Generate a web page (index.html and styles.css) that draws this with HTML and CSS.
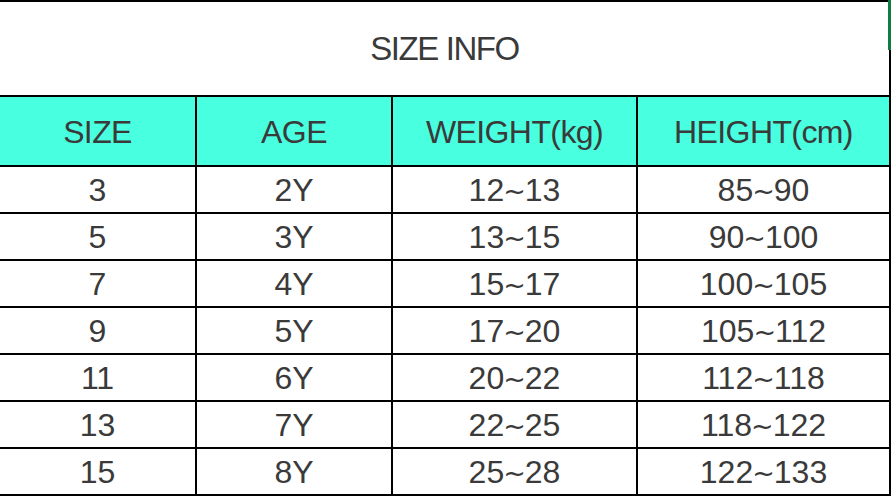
FILE: index.html
```html
<!DOCTYPE html>
<html>
<head>
<meta charset="utf-8">
<link rel="stylesheet" href="styles.css">
</head>
<body>
<div class="sheet">
  <div class="title">SIZE INFO</div>
  <div class="row head">
    <div class="cell c1">SIZE</div>
    <div class="cell c2">AGE</div>
    <div class="cell c3">WEIGHT(kg)</div>
    <div class="cell c4">HEIGHT(cm)</div>
  </div>
  <div class="row"><div class="cell c1">3</div><div class="cell c2">2Y</div><div class="cell c3">12<span class="t">~</span>13</div><div class="cell c4">85<span class="t">~</span>90</div></div>
  <div class="row"><div class="cell c1">5</div><div class="cell c2">3Y</div><div class="cell c3">13<span class="t">~</span>15</div><div class="cell c4">90<span class="t">~</span>100</div></div>
  <div class="row"><div class="cell c1">7</div><div class="cell c2">4Y</div><div class="cell c3">15<span class="t">~</span>17</div><div class="cell c4">100<span class="t">~</span>105</div></div>
  <div class="row"><div class="cell c1">9</div><div class="cell c2">5Y</div><div class="cell c3">17<span class="t">~</span>20</div><div class="cell c4">105<span class="t">~</span>112</div></div>
  <div class="row"><div class="cell c1">11</div><div class="cell c2">6Y</div><div class="cell c3">20<span class="t">~</span>22</div><div class="cell c4">112<span class="t">~</span>118</div></div>
  <div class="row"><div class="cell c1">13</div><div class="cell c2">7Y</div><div class="cell c3">22<span class="t">~</span>25</div><div class="cell c4">118<span class="t">~</span>122</div></div>
  <div class="row"><div class="cell c1">15</div><div class="cell c2">8Y</div><div class="cell c3">25<span class="t">~</span>28</div><div class="cell c4">122<span class="t">~</span>133</div></div>
  <div class="select-edge"></div>
</div>
</body>
</html>
```

FILE: styles.css
```css
html, body {
  margin: 0;
  padding: 0;
  background: #fff;
}
body {
  width: 891px;
  height: 496px;
  overflow: hidden;
  font-family: "Liberation Sans", Arial, sans-serif;
  color: #3a3a3a;
}
.sheet {
  position: relative;
  width: 891px;
  border-top: 2px solid #000;
  display: flex;
  flex-direction: column;
}
.title {
  height: 93px;
  box-sizing: content-box;
  border-bottom: 2px solid #000;
  border-right: 2px solid #000;
  display: flex;
  align-items: center;
  justify-content: center;
  font-size: 33px;
  letter-spacing: -1.4px;
}
.row {
  display: flex;
  height: 45px;
  border-bottom: 2px solid #000;
  font-size: 32px;
}
.row.head {
  height: 68px;
  background: #48ffe0;
  letter-spacing: -0.6px;
}
.cell {
  display: flex;
  align-items: center;
  justify-content: center;
  border-right: 2px solid #000;
  padding-top: 2px;
  box-sizing: border-box;
}
.t {
  font-family: "DejaVu Sans", sans-serif;
  font-size: 27px;
  margin: 0 -1px;
}
.c1 { width: 197px; }
.c2 { width: 196px; }
.c3 { width: 245px; }
.c4 { width: 253px; }
.select-edge {
  position: absolute;
  left: 888px;
  top: -2px;
  width: 3px;
  height: 50px;
  background: #107c41;
}
```
